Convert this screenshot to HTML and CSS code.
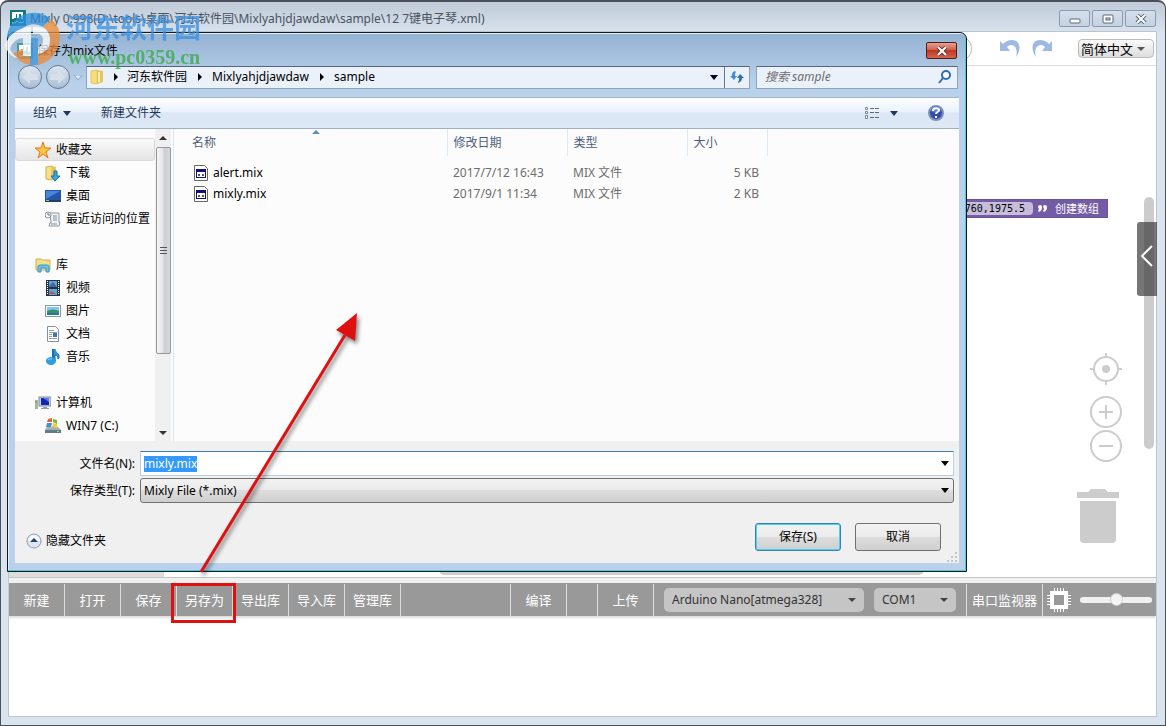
FILE: index.html
```html
<!DOCTYPE html>
<html lang="zh-CN">
<head>
    <meta charset="UTF-8">
    <meta name="viewport" content="width=device-width, initial-scale=1.0">
    <title>Mixly 0.998</title>
    <link rel="stylesheet" href="styles.css">
</head>
<body>
    <div class="window">
        <header class="titlebar">
            <svg class="app-icon" width="16" height="16" viewBox="0 0 16 16"><rect width="16" height="16" fill="#10797c"/><path d="M3 9V3h2v5M5 3h3v5M8 3h4v6" fill="none" stroke="#fff" stroke-width="2"/><path d="M2 13h3l2-2 3 2 4-1" fill="none" stroke="#fff"/></svg>
            <h1>Mixly 0.998(D:\tools\桌面\河东软件园\Mixlyahjdjawdaw\sample\12 7键电子琴.xml)</h1>
            <div class="window-buttons">
                <button aria-label="最小化"><svg width="12" height="10" viewBox="0 0 12 10"><rect x="1" y="5" width="10" height="4" rx="1" fill="#fff" stroke="#5a6675"/></svg></button>
                <button aria-label="最大化"><svg width="12" height="10" viewBox="0 0 12 10"><rect x="1" y="1" width="10" height="8" rx="1" fill="#fff" stroke="#5a6675"/><rect x="4" y="4" width="4" height="2" fill="#cfdbe8" stroke="#5a6675"/></svg></button>
                <button aria-label="关闭"><svg width="12" height="10" viewBox="0 0 12 10"><path d="M2 1l8 8M10 1L2 9" stroke="#5a6675" stroke-width="4"/><path d="M2 1l8 8M10 1L2 9" stroke="#fff" stroke-width="2"/></svg></button>
            </div>
        </header>

        <main class="pane">
            <div class="menubar">
                <span class="search-pill"></span>
                <button class="icon-button" aria-label="撤销"><svg width="20" height="20" viewBox="0 0 20 20"><path d="M0 2v10h10L7 8c5-5 12 0 9 10 6-8 4-17-4-17C8 1 5 3 3 5z" fill="#9db9e4"/></svg></button>
                <button class="icon-button" aria-label="重做"><svg width="20" height="20" viewBox="0 0 20 20"><path d="M20 2v10H10l3-4C8 3 1 8 4 18-2 10 0 1 8 1c4 0 7 2 9 4z" fill="#9db9e4"/></svg></button>
                <label class="picker language">
                    <select aria-label="语言"><option>简体中文</option></select>
                    <svg width="8" height="4" viewBox="0 0 8 4"><path d="M0 0h8L4 4z" fill="#555"/></svg>
                </label>
            </div>

            <div class="canvas">
                <div class="block">
                    <span class="block-text">587,1760,1975.5</span>
                    <svg width="10" height="8" viewBox="0 0 10 8"><path d="M0 2a2 2 0 0 1 4 0c0 3-1 4-3 5l-1-1 1-2zM5 2a2 2 0 0 1 4 0c0 3-1 4-3 5l-1-1 1-2z" fill="#fff"/></svg>
                    <span>创建数组</span>
                </div>
                <div class="scroll-v"></div>
                <div class="scroll-h"></div>
                <div class="toolbox-end"></div>
                <button class="side-toggle" aria-label="展开"><svg width="12" height="22" viewBox="0 0 12 22"><path d="M11 1L1 11l10 10" fill="none" stroke="#fff" stroke-width="2"/></svg></button>
                <div class="zoom-controls">
                    <button aria-label="居中"><svg width="32" height="32" viewBox="0 0 32 32"><circle cx="16" cy="16" r="12" fill="none" stroke="#ccc" stroke-width="2"/><circle cx="16" cy="16" r="4" fill="#ccc"/><path d="M16 0v4M16 28v4M0 16h4M28 16h4" stroke="#ccc" stroke-width="2"/></svg></button>
                    <button aria-label="放大"><svg width="32" height="32" viewBox="0 0 32 32"><circle cx="16" cy="16" r="15" fill="none" stroke="#ccc" stroke-width="2"/><path d="M9 16h14M16 9v14" stroke="#ccc" stroke-width="2"/></svg></button>
                    <button aria-label="缩小"><svg width="32" height="32" viewBox="0 0 32 32"><circle cx="16" cy="16" r="15" fill="none" stroke="#ccc" stroke-width="2"/><path d="M9 16h14" stroke="#ccc" stroke-width="2"/></svg></button>
                </div>
                <svg class="trash" width="42" height="55" viewBox="0 0 42 55"><path d="M0 3h11l3-3h14l3 3h11v6H0zM3 12h36v38q0 4-4 4H7q-4 0-4-4z" fill="#ccc"/></svg>
            </div>

            <div class="toolbar">
                <button>新建</button>
                <button>打开</button>
                <button>保存</button>
                <button>另存为</button>
                <button>导出库</button>
                <button>导入库</button>
                <button>管理库</button>
                <span class="spacer"></span>
                <button>编译</button>
                <span class="blank"></span>
                <button>上传</button>
                <label class="picker board">
                    <select aria-label="主板"><option>Arduino Nano[atmega328]</option></select>
                    <svg width="8" height="4" viewBox="0 0 8 4"><path d="M0 0h8L4 4z" fill="#444"/></svg>
                </label>
                <label class="picker port">
                    <select aria-label="端口"><option>COM1</option></select>
                    <svg width="8" height="4" viewBox="0 0 8 4"><path d="M0 0h8L4 4z" fill="#444"/></svg>
                </label>
                <button class="monitor">串口监视器</button>
                <svg class="chip" width="24" height="24" viewBox="0 0 24 24"><path d="M7.500 0v24M10.500 0v24M13.500 0v24M16.500 0v24M0 7.500h24M0 10.500h24M0 13.500h24M0 16.500h24" stroke="#fff"/><rect x="3" y="3" width="18" height="18" fill="#fff"/><rect x="7" y="7" width="10" height="10" fill="#999"/></svg>
                <input type="range" class="slider" aria-label="缩放" min="0" max="100" value="50">
            </div>
            <div class="console"></div>
        </main>
    </div>

    <section class="dialog" role="dialog" aria-labelledby="dialog-title">
        <div class="dialog-title">
            <svg width="16" height="16" viewBox="0 0 16 16"><rect width="16" height="16" fill="#3f9da6"/><path d="M3 9V3h2v5M5 3h3v5M8 3h4v6" fill="none" stroke="#fff" stroke-width="2"/><path d="M2 13h3l2-2 3 2 4-1" fill="none" stroke="#fff"/></svg>
            <h2 id="dialog-title">保存为mix文件</h2>
            <button class="close" aria-label="关闭"><svg width="12" height="10" viewBox="0 0 12 10"><path d="M2 1l8 8M10 1L2 9" stroke="#5b3a3a" stroke-width="4"/><path d="M2 1l8 8M10 1L2 9" stroke="#fff" stroke-width="2"/></svg></button>
        </div>

        <div class="nav-row">
            <button class="round" aria-label="后退"><svg width="16" height="14" viewBox="0 0 16 14"><path d="M8 0v4h8v6H8v4L0 7z" fill="#d6e0eb"/></svg></button>
            <button class="round" aria-label="前进"><svg width="16" height="14" viewBox="0 0 16 14"><path d="M8 0v4H0v6h8v4l8-7z" fill="#d6e0eb"/></svg></button>
            <svg width="8" height="5" viewBox="0 0 8 5"><path d="M0 0h8L4 5z" fill="#e2ecf6" stroke="#8ba3be"/></svg>
            <div class="address">
                <svg width="16" height="16" viewBox="0 0 16 16"><path d="M2 2l6-1v14l-6-1z" fill="#f7dc7c" stroke="#e6c75f"/><path d="M8 1l6 1v11l-6 2z" fill="#e9c45a"/><path d="M9 3h2v10H9z" fill="#fdf1b8"/></svg>
                <i class="crumb-arrow"></i><button>河东软件园</button>
                <i class="crumb-arrow"></i><button>Mixlyahjdjawdaw</button>
                <i class="crumb-arrow"></i><button>sample</button>
                <svg class="address-drop" width="8" height="5" viewBox="0 0 8 5"><path d="M0 0h8L4 5z" fill="#000024"/></svg>
                <button class="refresh" aria-label="刷新"><svg width="16" height="14" viewBox="0 0 16 14"><path d="M6 1C3 2 3 4 3 6H1l4 4 3-4H6c0-2 0-3 1-4z" fill="#3f8fd0"/><path d="M9 13c3-1 4-3 4-5h2l-4-4-3 4h2c0 2 0 3-1 4z" fill="#2f6fb8"/></svg></button>
            </div>
            <div class="search">
                <input type="text" aria-label="搜索" placeholder="搜索 sample">
                <svg width="14" height="14" viewBox="0 0 14 14"><circle cx="8" cy="5" r="4" fill="#fff" stroke="#2c6cb5" stroke-width="2"/><path d="M5 8l-4 5" stroke="#2c6cb5" stroke-width="2"/></svg>
            </div>
        </div>

        <div class="command-bar">
            <button>组织 <svg width="8" height="5" viewBox="0 0 8 5"><path d="M0 0h8L4 5z" fill="#1e395b"/></svg></button>
            <button>新建文件夹</button>
            <button class="view" aria-label="更改视图">
                <svg width="16" height="14" viewBox="0 0 16 14"><path d="M1.500 1.500h2v2h-2zM1.500 5.500h2v2h-2zM1.500 9.500h2v3h-2z" fill="#fff" stroke="#7b8796"/><path d="M6 2.500h4M11 2.500h4M6 6.500h4M11 6.500h4M6 11.500h4M11 11.500h4" stroke="#596b84"/></svg>
                <svg width="8" height="5" viewBox="0 0 8 5"><path d="M0 0h8L4 5z" fill="#1e395b"/></svg>
            </button>
            <button class="help" aria-label="帮助"><svg width="16" height="16" viewBox="0 0 16 16"><circle cx="8" cy="8" r="7" fill="#2c4fb6" stroke="#8191ab" stroke-width="2"/><path d="M3 6a5 5 0 0 1 10 0q-5 3-10 0" fill="#5d7fd6"/><path d="M5 6c0-4 6-3 6-1 0 2-3 2-3 4M8 11v2" fill="none" stroke="#fff" stroke-width="2"/></svg></button>
        </div>

        <div class="browser">
            <nav class="places">
                <div class="tree">
                    <ul>
                        <li class="group selected"><svg width="16" height="16" viewBox="0 0 16 16"><path d="M8 0l2 6h6l-5 4 2 6-5-4-5 4 2-6-5-4h6z" fill="#fcc540" stroke="#e2761b"/></svg><a href="#">收藏夹</a></li>
                        <li><svg width="16" height="16" viewBox="0 0 16 16"><path d="M1 2l6-1v14l-6-1z" fill="#f8df85" stroke="#d3b04c"/><path d="M7 1l4 1v11l-4 2z" fill="#e9c35a"/><path d="M9 6h3v5h3l-5 5-4-5h3z" fill="#39a5e8" stroke="#176fae"/></svg><a href="#">下载</a></li>
                        <li><svg width="16" height="16" viewBox="0 0 16 16"><rect x="0" y="2" width="16" height="12" fill="#2456a8"/><path d="M1 3h14L1 11z" fill="#4a84d8"/><path d="M0 12h16v2H0z" fill="#253f60"/><path d="M1 12h3v1H1z" fill="#7fd36a"/></svg><a href="#">桌面</a></li>
                        <li><svg width="16" height="16" viewBox="0 0 16 16"><path d="M5 2h9v9h1l-1 4H4l1-3h1z" fill="#edf0f3" stroke="#8f98a3"/><path d="M8 5h4M8 7h4M8 9h4M6 13h6" stroke="#8296ab"/><circle cx="3" cy="4" r="3" fill="#f6f8fa" stroke="#8f98a3"/><path d="M3 2v2h2" fill="none" stroke="#61778e"/></svg><a href="#">最近访问的位置</a></li>
                    </ul>
                    <ul>
                        <li class="group"><svg width="16" height="16" viewBox="0 0 16 16"><path d="M1 2h5l1 1h8v10H1z" fill="#f6df8b" stroke="#cfae50"/><path d="M3 15v-5q0-2 2-2h7q2 0 2 2v5h-3v-4H6v4z" fill="#69c4ea" stroke="#3993c2"/></svg><a href="#">库</a></li>
                        <li><svg width="16" height="16" viewBox="0 0 16 16"><rect x="1" y="0" width="14" height="16" fill="#273443"/><path d="M4 1h8v6H4zM4 9h8v6H4z" fill="#59a5dc"/><path d="M5 5l3-3 4 5H4z" fill="#3d6b9e"/><path d="M6 11l5 3H4z" fill="#b75050"/><path d="M2.500 1v14M13.500 1v14" stroke="#fff" stroke-dasharray="1 1"/></svg><a href="#">视频</a></li>
                        <li><svg width="16" height="16" viewBox="0 0 16 16"><rect x="0.500" y="2.500" width="15" height="11" fill="#fff" stroke="#8a96a5"/><path d="M2 4h12v4H2z" fill="#7cc7ee"/><path d="M2 8q6-3 12 0v2H2z" fill="#3d8c62"/><path d="M2 10h12v2H2z" fill="#2476a8"/></svg><a href="#">图片</a></li>
                        <li><svg width="16" height="16" viewBox="0 0 16 16"><path d="M2.500.5h8l3 3v12h-11z" fill="#fff" stroke="#8592a3"/><path d="M4 4.500h5M4 6.500h8M4 8.500h3M4 10.500h3M4 12.500h8" stroke="#8da3bd"/><path d="M8 7h4v4H8z" fill="#4675ad"/></svg><a href="#">文档</a></li>
                        <li><svg width="16" height="16" viewBox="0 0 16 16"><path d="M8 0h2c0 4 5 4 4 9l-1 1c0-3-1-4-3-4v6z" fill="#2c9ce0" stroke="#1c6fb4"/><path d="M8 0v10" stroke="#1c6fb4" stroke-width="2"/><ellipse cx="6" cy="12" rx="5" ry="4" fill="#2c9ce0"/><path d="M3 11q2-2 4-1" fill="none" stroke="#8dd3f8"/></svg><a href="#">音乐</a></li>
                    </ul>
                    <ul>
                        <li class="group"><svg width="16" height="16" viewBox="0 0 16 16"><rect x="4" y="2" width="12" height="9" fill="#c9d2dc" stroke="#7d8998"/><rect x="6" y="3" width="8" height="7" fill="#1524b8"/><path d="M8 3h6v4z" fill="#5978e8"/><path d="M8 12h4v1h2v1H6v-1h2z" fill="#8f9cab"/><path d="M0 5h3v9H0z" fill="#a8b5a4"/><path d="M1 6v2" stroke="#4fa244"/></svg><a href="#">计算机</a></li>
                        <li><svg width="16" height="16" viewBox="0 0 16 16"><path d="M2 9h11l3 3v3H0v-3z" fill="#a4b0b8"/><path d="M0 12h16v3H0z" fill="#617c88"/><path d="M12 13h2v1h-2z" fill="#7cf06a"/><path d="M3 1l4-1v4H2z" fill="#e8632b"/><path d="M8 1l4 1v4L8 4z" fill="#7ab93c"/><path d="M2 5h5l-1 4H1z" fill="#3c92d9"/><path d="M8 5l4 1v4l-5-1z" fill="#f8c838"/></svg><a href="#">WIN7 (C:)</a></li>
                    </ul>
                </div>
                <div class="tree-scroll">
                    <svg width="8" height="4" viewBox="0 0 8 4"><path d="M0 4h8L4 0z" fill="#333"/></svg>
                    <div class="thumb"><i></i><i></i><i></i></div>
                    <svg width="8" height="4" viewBox="0 0 8 4"><path d="M0 0h8L4 4z" fill="#333"/></svg>
                </div>
            </nav>
            <div class="files">
                <svg class="sort" width="8" height="4" viewBox="0 0 8 4"><path d="M0 4h8L4 0z" fill="#5a8fb8"/></svg>
                <table>
                    <thead>
                        <tr><th class="col-name">名称</th><th class="col-date">修改日期</th><th class="col-type">类型</th><th class="col-size">大小</th><th></th></tr>
                    </thead>
                    <tbody>
                        <tr>
                            <td class="name"><svg width="16" height="16" viewBox="0 0 16 16"><path d="M1.500.5h10l3 3v12h-13z" fill="#fff" stroke="#666"/><rect x="3.500" y="4.500" width="9" height="8" fill="#fff" stroke="#101078"/><path d="M3 4h10v3H3z" fill="#101078"/><path d="M5 10h2M6 9v2M9 10h2M10 9v2" fill="none" stroke="#222"/></svg>alert.mix</td>
                            <td>2017/7/12 16:43</td><td>MIX 文件</td><td class="size">5 KB</td><td></td>
                        </tr>
                        <tr>
                            <td class="name"><svg width="16" height="16" viewBox="0 0 16 16"><path d="M1.500.5h10l3 3v12h-13z" fill="#fff" stroke="#666"/><rect x="3.500" y="4.500" width="9" height="8" fill="#fff" stroke="#101078"/><path d="M3 4h10v3H3z" fill="#101078"/><path d="M5 10h2M6 9v2M9 10h2M10 9v2" fill="none" stroke="#222"/></svg>mixly.mix</td>
                            <td>2017/9/1 11:34</td><td>MIX 文件</td><td class="size">2 KB</td><td></td>
                        </tr>
                    </tbody>
                </table>
            </div>
        </div>

        <form class="save-form" id="saveForm">
            <div class="field">
                <label for="filename">文件名(N):</label>
                <div class="combo filename">
                    <input type="text" id="filename" value="mixly.mix">
                    <svg width="8" height="5" viewBox="0 0 8 5"><path d="M0 0h8L4 5z"/></svg>
                </div>
            </div>
            <div class="field">
                <label for="filetype">保存类型(T):</label>
                <div class="combo filetype">
                    <select id="filetype"><option>Mixly File (*.mix)</option></select>
                    <svg width="8" height="5" viewBox="0 0 8 5"><path d="M0 0h8L4 5z"/></svg>
                </div>
            </div>
            <div class="actions">
                <button type="button" class="hide-folders"><svg width="16" height="16" viewBox="0 0 16 16"><circle cx="8" cy="8" r="7" fill="#dce7f2" stroke="#8d9cae"/><path d="M2 8a6 6 0 0 1 12 0z" fill="#f7fafd"/><path d="M4 9h8L8 5z" fill="#1e3f78"/></svg>隐藏文件夹</button>
                <button type="submit" class="push primary">保存(S)</button>
                <button type="button" class="push">取消</button>
            </div>
            <svg class="grip" width="10" height="10" viewBox="0 0 10 10"><path d="M8 0h2v2H8zM4 4h2v2H4zM8 4h2v2H8zM0 8h2v2H0zM4 8h2v2H4zM8 8h2v2H8z" fill="#c4c4c4"/></svg>
        </form>
    </section>

    <div class="watermark">
        <svg width="56" height="56" viewBox="0 0 56 56">
            <path d="M2 26A27 27 0 0 1 46 9L38 17Q28 11 18 18L4 30z" fill="#2c8fdd"/>
            <path d="M46 9Q56 17 55 29 52 50 33 55V44Q44 40 44 28 44 20 38 17z" fill="#ee8a35"/>
            <path d="M8 44l8-5h9v16Q14 53 8 44z" fill="#ee8a35"/>
            <path d="M25 28h8v27h-8z" fill="#3c95dc"/>
            <path d="M0 35Q7 18 26 17v29h-8V28Q8 29 5 39q3 7 10 10Q3 47 0 35z" fill="#fff"/>
            <path d="M28 17q17-1 17 13 0 12-12 14v-7q5-1 5-7 0-7-10-7z" fill="#fff"/>
        </svg>
        <div class="watermark-text">
            <span class="site-name">河东软件园</span>
            <span class="site-url">www.pc0359.cn</span>
        </div>
    </div>

    <div class="mark-box"></div>
    <svg class="mark-arrow" width="170" height="270" viewBox="0 0 170 270">
        <path d="M9 264L153 27" stroke="#e01010" stroke-width="3"/>
        <path d="M165 5L163 33L153 27L144 22z" fill="#e01010"/>
    </svg>

    <script>
        const filename = document.getElementById("filename");
        filename.focus();
        filename.select();

        document.getElementById("saveForm").addEventListener("submit", function (e) {
            e.preventDefault();
        });
    </script>
</body>
</html>
```
FILE: styles.css
```css
* {
    box-sizing: border-box;
}

body {
    margin: 0;
    font-family: "Noto Sans", "Noto Sans CJK SC", sans-serif;
    font-size: 12px;
    line-height: 16px;
    color: #000;
}

button, input, select {
    font: inherit;
    color: inherit;
    margin: 0;
    padding: 0;
    border: none;
    background: none;
    outline: none;
}

select {
    appearance: none;
}

h1, h2 {
    margin: 0;
    font-size: 12px;
    font-weight: normal;
}

svg {
    flex: none;
    display: block;
}

/* main window */
.window {
    display: flex;
    flex-direction: column;
    min-height: 100vh;
    padding: 0 8px 8px 7px;
    border: 1px solid #4b4f5c;
    border-top-width: 2px;
    border-radius: 8px 8px 0 0;
    background: linear-gradient(#c0cad8, #d9e4ef 32px, #d9e4ef);
}

.titlebar {
    display: flex;
    gap: 4px;
    height: 29px;
    padding: 8px 1px 0 2px;
    color: #4a535e;
}

.titlebar h1 {
    flex: 1;
    padding-top: 1px;
}

.window-buttons {
    display: flex;
    gap: 2px;
}

.window-buttons button {
    display: grid;
    place-items: center;
    width: 31px;
    height: 17px;
    border: 1px solid #8b99b3;
    border-radius: 2px;
    background: linear-gradient(#d4dfeb, #c5d2e0);
}

.pane {
    flex: 1;
    display: flex;
    flex-direction: column;
    border: 1px solid #bcc3cb;
    background: #fff;
}

.menubar {
    display: flex;
    align-items: center;
    justify-content: flex-end;
    gap: 12px;
    height: 34px;
    padding-right: 2px;
    border-bottom: 1px solid #ddd;
}

.search-pill {
    width: 60px;
    height: 25px;
    margin-right: 16px;
    border: 1px solid #bbb;
    border-radius: 12px;
}

.picker {
    display: grid;
    align-items: center;
}

.picker select, .picker svg {
    grid-area: 1 / 1;
}

.picker svg {
    justify-self: end;
    margin-right: 8px;
    pointer-events: none;
}

.language {
    margin-left: 14px;
    width: 76px;
    height: 19px;
    border: 1px solid #bbb;
    border-radius: 4px;
    background: linear-gradient(#fafafa, #ddd);
    font-size: 13px;
}

.language select {
    padding-left: 2px;
}

.canvas {
    position: relative;
    flex: 1;
    border-bottom: 1px solid #c4c4c4;
}

.block {
    position: absolute;
    top: 133px;
    right: 48px;
    display: flex;
    align-items: center;
    gap: 5px;
    height: 19px;
    padding: 0 8px;
    background: #745ba5;
    border: 1px solid #6a5199;
    color: #fff;
    font-size: 11px;
}

.block-text {
    padding: 0 8px 0 5px;
    border-radius: 4px;
    background: #c7bddb;
    color: #000;
    font-family: "DejaVu Sans Mono", monospace;
    font-size: 10px;
    line-height: 13px;
}

.block svg {
    margin-right: 2px;
}

.scroll-v {
    position: absolute;
    top: 131px;
    right: 2px;
    width: 10px;
    height: 252px;
    border-radius: 5px;
    background: #ccc;
}

.scroll-h {
    position: absolute;
    left: 430px;
    right: 232px;
    bottom: 2px;
    height: 10px;
    border-radius: 5px;
    background: #ccc;
}

.toolbox-end {
    position: absolute;
    left: 0;
    bottom: 0;
    width: 155px;
    height: 60px;
    background: #ddd;
}

.side-toggle {
    position: absolute;
    top: 156px;
    right: -1px;
    display: grid;
    place-items: center;
    width: 20px;
    height: 74px;
    padding-bottom: 6px;
    border-radius: 3px 0 0 3px;
    background: rgba(60, 60, 60, 0.7);
}

.zoom-controls {
    position: absolute;
    right: 34px;
    bottom: 115px;
    display: grid;
    gap: 2px;
}

.zoom-controls button:first-child {
    margin-bottom: 9px;
}

.trash {
    position: absolute;
    right: 37px;
    bottom: 33px;
}

.toolbar {
    display: flex;
    align-items: center;
    height: 38px;
    border-top: 5px solid #f0f0f0;
    background: #999;
    color: #fff;
    font-size: 13px;
    box-shadow: 0 2px 2px #ddd;
}

.toolbar button {
    width: 56px;
    height: 32px;
    border-right: 1px solid #ddd;
    white-space: nowrap;
}

.toolbar .spacer {
    flex: 1;
    height: 32px;
    border-right: 1px solid #ddd;
}

.toolbar .blank {
    width: 31px;
    height: 32px;
    border-right: 1px solid #ddd;
}

.board, .port {
    height: 24px;
    margin-left: 10px;
    border-radius: 5px;
    background: #c5c5c5;
    color: #333;
    font-size: 12px;
}

.board {
    width: 200px;
}

.port {
    width: 82px;
}

.board select, .port select {
    padding-left: 8px;
}

.toolbar .monitor {
    width: 77px;
    margin-left: 10px;
    border-left: 1px solid #ddd;
}

.chip {
    margin: 0 9px 0 4px;
}

.slider {
    appearance: none;
    width: 72px;
    height: 6px;
    margin-right: 4px;
    border-radius: 3px;
    background: #f0f0f0;
}

.slider::-webkit-slider-thumb {
    appearance: none;
    width: 13px;
    height: 13px;
    border: 1px solid #ccc;
    border-radius: 50%;
    background: #f4f4f4;
}

.console {
    height: 100px;
}

/* save dialog */
.dialog {
    position: absolute;
    top: 32px;
    left: 7px;
    right: 199px;
    display: flex;
    flex-direction: column;
    padding: 0 7px 8px;
    border: 1px solid #101820;
    border-radius: 7px 7px 0 0;
    background: linear-gradient(#94b2d2, #b9d1ea 50px);
    box-shadow: inset -1px -1px #4cc8dd, inset 1px 1px #e4eef8;
}

.dialog-title {
    display: flex;
    align-items: center;
    gap: 4px;
    height: 32px;
    padding: 3px 2px 0 2px;
}

.dialog-title h2 {
    flex: 1;
}

.close {
    display: grid;
    place-items: center;
    width: 31px;
    height: 17px;
    border: 1px solid #4b1d20;
    border-radius: 2px;
    background: linear-gradient(#e6a091, #d4614c 45%, #be3823 50%, #d5644b);
}

.nav-row {
    display: flex;
    align-items: center;
    gap: 4px;
    height: 32px;
    padding: 0 1px 8px 3px;
}

.round {
    display: grid;
    place-items: center;
    width: 24px;
    height: 24px;
    border: 1px solid #66788f;
    border-radius: 50%;
    background: linear-gradient(#dce6f1, #aabdd3);
}

.address {
    flex: 1;
    display: flex;
    align-items: center;
    height: 23px;
    padding-left: 2px;
    border: 1px solid #8fa2b8;
    border-top-color: #56657a;
    background: #ebf1f9;
}

.crumb-arrow {
    margin: 0 10px 0 11px;
    border: 4px solid transparent;
    border-left-color: #000;
    border-right-width: 0;
}

.crumb-arrow:first-of-type {
    margin: 0 9px;
}

.address-drop {
    margin: 0 6px 0 auto;
}

.refresh {
    display: grid;
    place-items: center;
    width: 25px;
    height: 21px;
    border-left: 1px solid #68788d;
}

.search {
    display: flex;
    align-items: center;
    width: 202px;
    height: 23px;
    margin-left: 2px;
    padding: 0 5px 0 8px;
    border: 1px solid #8fa2b8;
    border-top-color: #56657a;
    background: #ebf1f9;
}

.search input {
    flex: 1;
    min-width: 0;
    font-style: italic;
}

.search input::placeholder {
    color: #6d6d6d;
}

.command-bar {
    display: flex;
    align-items: center;
    height: 32px;
    padding: 0 15px 0 18px;
    border-top: 1px solid #a3b8cf;
    border-bottom: 1px solid #a0afc3;
    background: linear-gradient(#fdfeff, #eaf2fb 45%, #dce6f4 50%, #dde9f7);
    color: #1e395b;
}

.command-bar button {
    display: flex;
    align-items: center;
    gap: 6px;
    margin-right: 30px;
}

.command-bar .view {
    gap: 10px;
    margin-left: auto;
}

.command-bar .help {
    margin-right: 0;
}

.browser {
    display: flex;
    height: 312px;
    background: #fcfcfc;
}

.places {
    display: flex;
    width: 159px;
    border-right: 1px solid #d9e5f2;
}

.tree {
    flex: 1;
    padding-top: 9px;
}

.tree ul {
    margin: 0 0 23px;
    padding: 0;
    list-style: none;
}

.tree li {
    display: flex;
    align-items: center;
    gap: 5px;
    height: 23px;
    padding-left: 30px;
    white-space: nowrap;
}

.tree .group {
    padding-left: 20px;
}

.tree .selected {
    padding-left: 19px;
    border: 1px solid #d9d9d9;
    border-radius: 3px;
    background: linear-gradient(#fafafa, #e5e5e5);
}

.tree a {
    color: #000;
    text-decoration: none;
}

.tree-scroll {
    display: flex;
    flex-direction: column;
    align-items: center;
    width: 16px;
    margin-right: 2px;
    padding: 7px 0 6px;
    background: #f0f0f0;
}

.thumb {
    display: grid;
    align-content: center;
    justify-content: center;
    gap: 2px;
    width: 15px;
    height: 207px;
    margin: 7px 0 auto;
    border: 1px solid #979797;
    border-radius: 2px;
    background: linear-gradient(90deg, #f5f5f5, #e4e4e6 45%, #cdcdd2 55%, #d8d8dc);
}

.thumb i {
    width: 7px;
    height: 1px;
    background: #555;
}

.files {
    position: relative;
    flex: 1;
}

.sort {
    position: absolute;
    top: 1px;
    left: 138px;
}

.files table {
    width: 100%;
    table-layout: fixed;
    border-collapse: collapse;
}

.files th {
    height: 27px;
    padding: 0 0 0 6px;
    border-right: 1px solid #dfe9f4;
    color: #4c607a;
    font-weight: normal;
    text-align: left;
}

.files th:last-child {
    border-right: none;
}

.files .col-name {
    width: 273px;
    padding-left: 18px;
}

.col-date, .col-type {
    width: 120px;
}

.col-size {
    width: 80px;
}

.files td {
    height: 21px;
    padding: 0 0 0 6px;
    color: #6d6d6d;
}

.files tbody::before {
    content: "";
    display: block;
    height: 6px;
}

.files .name {
    display: flex;
    align-items: center;
    gap: 4px;
    padding-left: 19px;
    color: #000;
}

.files .size {
    padding-right: 8px;
    text-align: right;
}

.save-form {
    position: relative;
    display: flex;
    flex-direction: column;
    gap: 2px;
    padding: 10px 5px 12px 11px;
    background: #f0f0f0;
}

.field {
    display: flex;
    align-items: center;
    gap: 5px;
}

.field label {
    width: 109px;
    text-align: right;
}

.combo {
    flex: 1;
    display: grid;
    align-items: center;
    height: 25px;
    border: 1px solid #b5cfe7;
    border-top-color: #3d7bad;
    background: #fff;
}

.combo input, .combo select, .combo svg {
    grid-area: 1 / 1;
}

.combo input, .combo select {
    padding-left: 3px;
}

.combo svg {
    justify-self: end;
    margin-right: 4px;
    pointer-events: none;
}

.combo input::selection {
    background: #3399ff;
    color: #fff;
}

.filetype {
    border: 1px solid #707070;
    border-radius: 3px;
    background: linear-gradient(#f2f2f2, #ebebeb 49%, #dddddd 50%, #cfcfcf);
}

.actions {
    display: flex;
    align-items: center;
    gap: 14px;
    padding: 18px 13px 0 0;
}

.hide-folders {
    display: flex;
    align-items: center;
    gap: 4px;
    margin: 8px auto 0 0;
}

.push {
    width: 86px;
    height: 28px;
    border: 1px solid #707070;
    border-radius: 3px;
    background: linear-gradient(#f2f2f2, #ebebeb 49%, #dddddd 50%, #cfcfcf);
}

.primary {
    border-color: #3c7fb1;
    box-shadow: inset 0 0 0 1px #46d3f5;
}

.grip {
    position: absolute;
    right: 2px;
    bottom: 1px;
}

/* site watermark and markers over the windows */
.watermark {
    position: absolute;
    top: 10px;
    left: 5px;
    display: flex;
    gap: 5px;
    opacity: 0.75;
    pointer-events: none;
}

.watermark-text {
    display: grid;
    align-content: start;
    font-weight: bold;
}

.site-name {
    color: #3a8fe0;
    font-size: 27px;
    line-height: 36px;
}

.site-url {
    padding-left: 2px;
    color: #35a845;
    font-family: "Liberation Serif", serif;
    font-size: 20px;
    line-height: 22px;
}

.mark-box {
    position: absolute;
    top: 583px;
    left: 171px;
    width: 65px;
    height: 40px;
    border: 3px solid #e01010;
}

.mark-arrow {
    position: absolute;
    top: 308px;
    left: 192px;
    filter: drop-shadow(2px 3px 2px rgba(0, 0, 0, 0.5));
    pointer-events: none;
}
```
